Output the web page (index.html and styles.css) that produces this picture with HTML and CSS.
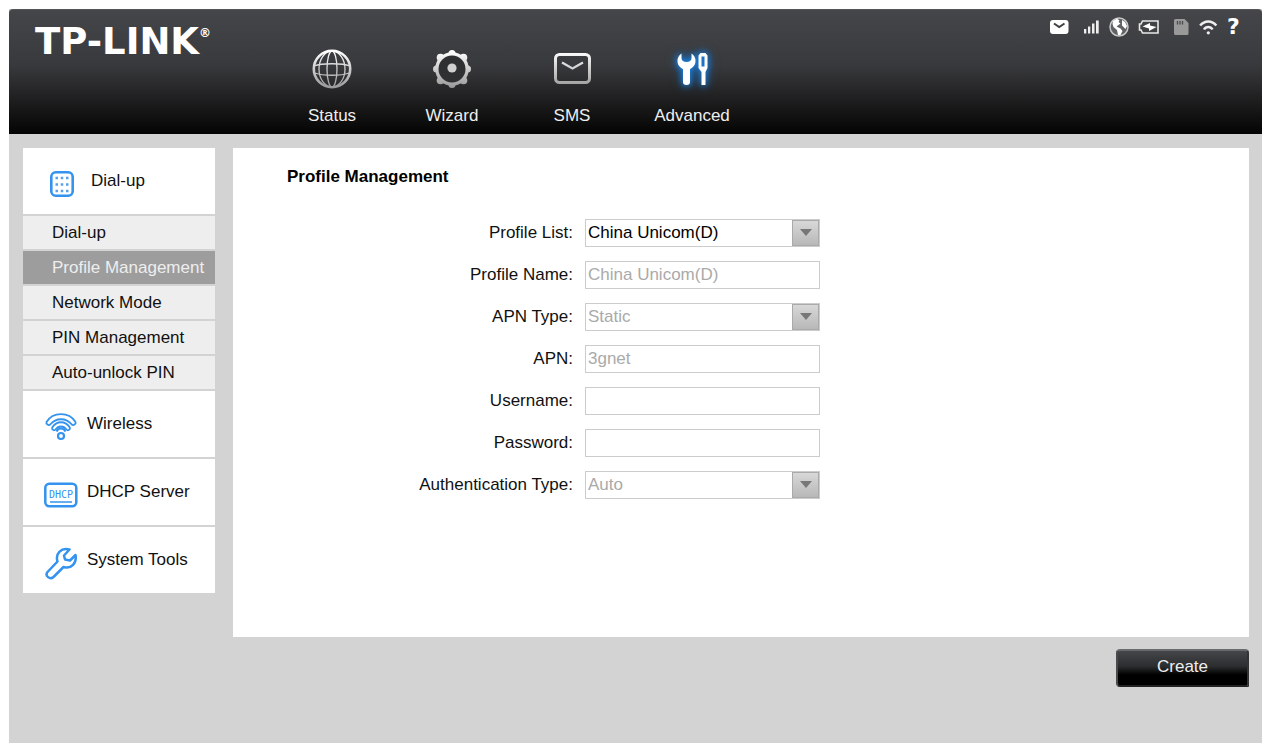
FILE: index.html
```html
<!DOCTYPE html>
<html lang="en">
<head>
  <meta charset="UTF-8">
  <title>TP-LINK - Profile Management</title>
  <link rel="stylesheet" href="styles.css">
</head>
<body>
  <header class="header">
    <a class="logo" href="#">TP-LINK<sup>®</sup></a>
    <nav class="main-nav">
      <a href="#">
        <svg width="44" height="44" viewBox="0 0 44 44" fill="none">
          <defs>
            <linearGradient id="silver" x1="0" y1="0" x2="0" y2="44" gradientUnits="userSpaceOnUse">
              <stop offset="0.1" stop-color="#fff"/>
              <stop offset="1" stop-color="#909090"/>
            </linearGradient>
          </defs>
          <g stroke="url(#silver)">
            <circle cx="22" cy="22" r="18.2" stroke-width="2.6"/>
            <g stroke-width="1.3">
              <ellipse cx="22" cy="22" rx="13" ry="18"/>
              <ellipse cx="22" cy="22" rx="5" ry="18"/>
              <path d="M4 19c8-3 28-3 36 0M5 26c8 3 26 3 34 0"/>
            </g>
          </g>
        </svg>
        <span>Status</span>
      </a>
      <a href="#">
        <svg width="44" height="44" viewBox="0 0 44 44" fill="url(#silver)">
          <circle cx="22" cy="22" r="16.800"/>
          <circle cx="22" cy="6.500" r="3.500"/>
          <circle cx="22" cy="37.500" r="3.500"/>
          <circle cx="6.500" cy="22" r="3.500"/>
          <circle cx="37.500" cy="22" r="3.500"/>
          <circle cx="10.500" cy="10.500" r="3.800"/>
          <circle cx="33.500" cy="10.500" r="3.800"/>
          <circle cx="10.500" cy="33.500" r="3.800"/>
          <circle cx="33.500" cy="33.500" r="3.800"/>
          <circle cx="22" cy="22" r="13.500" fill="#2f3032"/>
          <circle cx="22" cy="21" r="4.600" fill="#d0d0d0"/>
        </svg>
        <span>Wizard</span>
      </a>
      <a href="#">
        <svg width="44" height="44" viewBox="0 0 44 44" fill="none" stroke="url(#silver)">
          <rect x="5.500" y="7.500" width="34" height="28" rx="4" stroke-width="3"/>
          <path d="M12 15.500l10.500 6 10.500-6" stroke-width="2.200"/>
        </svg>
        <span>SMS</span>
      </a>
      <a href="#" class="active">
        <svg width="44" height="44" viewBox="0 0 44 44" fill="#fff">
          <path d="M11.500 6.500a9 9 0 0 0-4 7.500c0 4 2.500 6.500 5.500 8v13c0 2 1 3 3.500 3s3.500-1 3.500-3V22c3-1.500 5.500-4 5.500-8a9 9 0 0 0-4-7.500V11c0 2.500-2 4-5 4s-5-1.500-5-4z"/>
          <path d="M30.500 6h5l2 2.500v12.500L35.500 25v13h-4V25l-3-4V8.500zM31.500 9.500v10h3v-10z" fill-rule="evenodd"/>
        </svg>
        <span>Advanced</span>
      </a>
    </nav>
    <div class="status-icons">
      <svg width="20" height="20" viewBox="0 0 20 20">
        <rect x="0" y="3" width="18.500" height="14" rx="3" fill="#fff"/>
        <path d="M4 6.500l5.200 3.500L14.500 6.500" fill="none" stroke="#3d3e41" stroke-width="2"/>
      </svg>
      <svg class="spaced" width="16" height="20" viewBox="0 0 16 20" fill="#eee">
        <path d="M0 12h2.300v4.500H0zM4 9.500h2.300v7H4zM8 6.500h2.500v10H8zM12 3.500h2.700v13H12z"/>
      </svg>
      <svg width="20" height="20" viewBox="0 0 20 20">
        <circle cx="10" cy="10" r="9" fill="#606165" stroke="#c8c8c8" stroke-width="1.500"/>
        <path d="M4 4L8 1.500l2.500 2-1 1.500 2 1.500-4 3 4 2 2 2.500-2 4-2.500 0-1-5-3.500-3-1-3zM13 3l3 2 2 4-1.500 3-3.500-3.500z" fill="#fff"/>
      </svg>
      <svg width="22" height="20" viewBox="0 0 22 20">
        <path d="M4.500 4H20v12H4.500L3 13H1.500V7H3z" fill="none" stroke="#e8e8e8" stroke-width="1.600"/>
        <path d="M4.500 9.500L12 6v2.500l6.500 1.500L11 14v-2.500z" fill="#fff"/>
      </svg>
      <svg class="spaced" width="16" height="20" viewBox="0 0 16 20">
        <path d="M1.500 2H10.500l4 4v10.500a1.500 1.500 0 0 1-1.500 1.500H1.500A1.500 1.500 0 0 1 0 16.500v-13A1.500 1.500 0 0 1 1.500 2z" fill="#999"/>
        <path d="M3.500 4v3.500M6 4v3.500M8.500 4v3.500" stroke="#4a4b4e" stroke-width="1.300"/>
      </svg>
      <svg width="19" height="20" viewBox="0 0 19 20" fill="none" stroke="#eee" stroke-width="2.500">
        <path d="M1.200 8.500C5.500 3 13 3 17.300 8.500M5 12.500c2-3.500 6.500-3.500 8.500 0"/>
        <circle cx="9.300" cy="15.800" r="1.600" fill="#eee" stroke="none"/>
      </svg>
      <a class="help" href="#">?</a>
    </div>
  </header>

  <div class="container">
    <aside class="sidebar">
      <a class="menu-head" href="#">
        <svg width="38" height="34" viewBox="0 0 38 34">
          <rect x="7.300" y="5.300" width="21.400" height="23.400" rx="4.500" fill="none" stroke="#3393ee" stroke-width="2.600"/>
          <path d="M11.500 11h14M11.500 17.500h14M11.500 24h14" stroke="#5a9fea" stroke-width="2.500" stroke-dasharray="2.500 2.750"/>
        </svg>
        Dial-up
      </a>
      <a class="menu-sub" href="#">Dial-up</a>
      <a class="menu-sub selected" href="#">Profile Management</a>
      <a class="menu-sub" href="#">Network Mode</a>
      <a class="menu-sub" href="#">PIN Management</a>
      <a class="menu-sub" href="#">Auto-unlock PIN</a>
      <a class="menu-head" href="#">
        <svg width="34" height="34" viewBox="0 0 34 34" fill="none" stroke="#3393ee" stroke-width="1.800">
          <path d="M2.500 12C9 1.500 25 1.500 31.500 12c.8 2-2 4-3.700 2.500C22 7.500 12 7.500 6.200 14.500 4.500 16 1.700 14 2.500 12z"/>
          <path d="M8.200 17.500C12.500 10.500 21.500 10.500 25.800 17.500c.8 2-1.800 3.600-3.300 2-3-4-8-4-11 0-1.500 1.600-4.100 0-3.300-2z"/>
          <path d="M12.500 21.500c2-4 7-4 9 0" stroke-width="2.200"/>
          <circle cx="17" cy="26" r="3" stroke-width="2.200"/>
        </svg>
        Wireless
      </a>
      <a class="menu-head" href="#">
        <svg width="34" height="34" viewBox="0 0 34 34">
          <rect x="1.300" y="5.800" width="31" height="22.500" rx="4" fill="none" stroke="#3393ee" stroke-width="2.500"/>
          <text class="dhcp-text" x="17" y="20" text-anchor="middle">DHCP</text>
          <path d="M6 24h22" stroke="#3393ee" stroke-width="1.500"/>
        </svg>
        DHCP Server
      </a>
      <a class="menu-head" href="#">
        <svg width="34" height="34" viewBox="0 0 34 34" fill="none" stroke="#3393ee" stroke-width="2.500" stroke-linejoin="round">
          <path d="M25.500 3.500c-8-2.500-14.500 4-12 12L3.500 26c-3 4 2.500 8 6 5L19.500 21c8 2.500 13.500-4 12-12l-5.500 5.500-5-1-1-4z"/>
        </svg>
        System Tools
      </a>
    </aside>

    <main class="content">
      <form id="profileForm">
        <div class="panel">
          <h2>Profile Management</h2>
          <div class="row">
            <label for="profileList">Profile List:</label>
            <span class="select-box">
              <select id="profileList"><option>China Unicom(D)</option></select>
            </span>
          </div>
          <div class="row">
            <label for="profileName">Profile Name:</label>
            <input type="text" id="profileName" value="China Unicom(D)" disabled>
          </div>
          <div class="row">
            <label for="apnType">APN Type:</label>
            <span class="select-box">
              <select id="apnType" disabled><option>Static</option></select>
            </span>
          </div>
          <div class="row">
            <label for="apn">APN:</label>
            <input type="text" id="apn" value="3gnet" disabled>
          </div>
          <div class="row">
            <label for="username">Username:</label>
            <input type="text" id="username" disabled>
          </div>
          <div class="row">
            <label for="password">Password:</label>
            <input type="password" id="password" disabled>
          </div>
          <div class="row">
            <label for="authType">Authentication Type:</label>
            <span class="select-box">
              <select id="authType" disabled><option>Auto</option></select>
            </span>
          </div>
        </div>
        <div class="actions">
          <button type="submit" class="create-btn">Create</button>
        </div>
      </form>
    </main>
  </div>
</body>
</html>
```

FILE: styles.css
```css
* {
  box-sizing: border-box;
}

html {
  background: #fff;
}

body {
  margin: 9px 3px 2px 9px;
  min-height: calc(100vh - 11px);
  background: #d3d3d3;
  color: #111;
  font-family: Arial, "Liberation Sans", sans-serif;
  font-size: 17px;
  line-height: 22px;
}

a {
  color: inherit;
  text-decoration: none;
}

/* Header */
.header {
  display: flex;
  height: 125px;
  padding-right: 19px;
  background: linear-gradient(#454649, #38393c 45%, #1c1c1d 75%, #040404);
  border-top: 1px solid #55565a;
  border-radius: 4px 4px 0 0;
  color: #eee;
}

.logo {
  width: 263px;
  padding: 12px 0 0 26px;
  color: #fff;
  font-family: "DejaVu Sans", sans-serif;
  font-size: 37px;
  font-weight: bold;
  line-height: 40px;
  white-space: nowrap;
}
.logo sup {
  font-size: 12px;
  line-height: 12px;
  vertical-align: 17px;
}

/* Main navigation */
.main-nav {
  display: flex;
}
.main-nav a {
  display: flex;
  flex-direction: column;
  align-items: center;
  width: 120px;
  padding-top: 37px;
}
.main-nav span {
  margin-top: 14px;
}
.main-nav .active svg {
  overflow: visible;
  filter: drop-shadow(0 0 3px #1a8cf0) drop-shadow(0 0 4px #1565b5);
}

/* Status icons on the right */
.status-icons {
  display: flex;
  gap: 9px;
  height: 20px;
  margin: 7px 0 0 auto;
}
.status-icons .spaced {
  margin-left: 5px;
}
.help {
  width: 16px;
  color: #fff;
  font-family: "DejaVu Sans", sans-serif;
  font-size: 22px;
  font-weight: bold;
  line-height: 20px;
}

/* Page columns */
.container {
  display: flex;
  align-items: flex-start;
  gap: 18px;
  padding: 14px 13px 14px 14px;
}

/* Sidebar menu */
.sidebar {
  display: flex;
  flex-direction: column;
  flex: none;
  gap: 2px;
  width: 192px;
}
.menu-head {
  display: flex;
  align-items: center;
  gap: 9px;
  height: 66px;
  padding-left: 21px;
  background: #fff;
}
.menu-head svg {
  margin-top: 6px;
}
.menu-sub {
  height: 33px;
  padding-left: 29px;
  background: #eee;
  line-height: 33px;
}
.menu-sub.selected {
  background: #9d9d9d;
  color: #eee;
}
.dhcp-text {
  fill: #3393ee;
  font-family: "DejaVu Sans Mono", monospace;
  font-size: 10px;
}

/* Profile form */
.content {
  flex: 1;
}
.panel {
  min-height: 489px;
  padding: 18px 54px;
  background: #fff;
}
.panel h2 {
  margin: 0 0 31px;
  color: #000;
  font-size: 17px;
}
.row {
  display: flex;
  gap: 12px;
  margin-bottom: 14px;
}
.row label {
  width: 286px;
  line-height: 28px;
  text-align: right;
}
.row input,
.row select {
  width: 235px;
  height: 28px;
  padding: 0 2px;
  background: #fff;
  border: 1px solid #ccc;
  border-radius: 0;
  color: #000;
  font: inherit;
}
.row select {
  appearance: none;
}
.row input:disabled,
.row select:disabled {
  color: #aaa;
  opacity: 1;
}

/* Arrow button drawn over the select */
.select-box {
  position: relative;
}
.select-box::before {
  content: "";
  position: absolute;
  top: 1px;
  right: 1px;
  width: 25px;
  height: 24px;
  background: linear-gradient(#d8d8d8, #b8b8b8);
  border: 1px solid #aaa;
  pointer-events: none;
}
.select-box::after {
  content: "";
  position: absolute;
  top: 10px;
  right: 8px;
  border: 6px solid transparent;
  border-top: 7px solid #777;
  border-bottom: 0;
  pointer-events: none;
}

/* Create button */
.actions {
  display: flex;
  justify-content: flex-end;
  padding-top: 12px;
}
.create-btn {
  width: 133px;
  height: 38px;
  padding: 0 0 3px;
  background: linear-gradient(#454649, #2c2d2f 45%, #000 70%);
  border: 2px solid #4a4a4c;
  border-color: #68696b #333 #222 #4a4a4c;
  border-radius: 4px 4px 0 4px;
  color: #eee;
  font: inherit;
  cursor: pointer;
}
```
